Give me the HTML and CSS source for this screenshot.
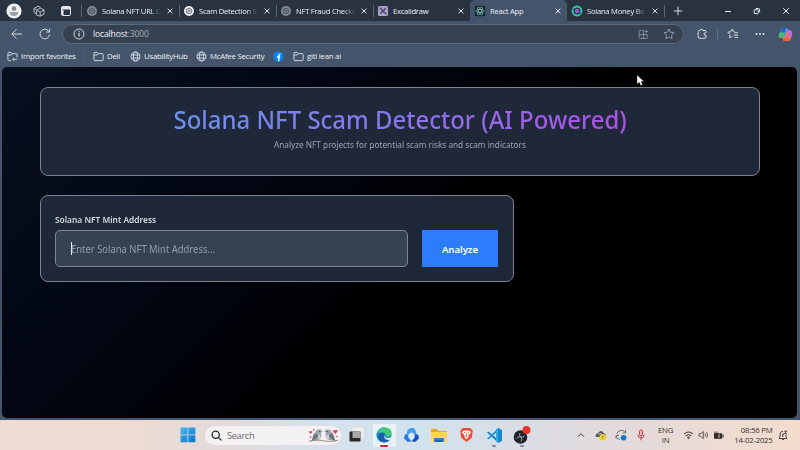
FILE: index.html
```html
<!DOCTYPE html>
<html lang="en">
<head>
<meta charset="utf-8">
<title>React App</title>
<link rel="stylesheet" href="styles.css">
</head>
<body>
<svg class="defs" width="0" height="0">
  <symbol id="globe" viewBox="0 0 12 12"><g fill="none" stroke="currentColor"><circle cx="6" cy="6" r="4.9"/><ellipse cx="6" cy="6" rx="2.2" ry="4.9"/><path d="M1.3 4.3h9.4M1.3 7.7h9.4"/></g></symbol>
  <symbol id="folder" viewBox="0 0 12 12"><path d="M1 9.5v-7q0-1 1-1h2.5l1.3 1.4H10q1 0 1 1v5.6q0 1-1 1H2q-1 0-1-1zM1 4.4h3.5l1.3-1.5" fill="none" stroke="currentColor"/></symbol>
  <symbol id="x" viewBox="0 0 8 8"><path d="M1.6 1.6l4.8 4.8M6.4 1.6L1.6 6.4" stroke="currentColor" stroke-width=".9"/></symbol>
  <symbol id="gpt" viewBox="0 0 12 12"><circle cx="6" cy="6" r="5" fill="currentColor"/><g fill="none" stroke="#303b48" stroke-width=".5" stroke-opacity=".75"><circle cx="6" cy="6" r="2.9"/><path d="M6 3.2l2.4 1.4v2.8L6 8.8 3.6 7.4V4.6zM3.6 4.6l4.8 2.8M8.4 4.6L3.6 7.4M6 3.2v5.6"/></g></symbol>
</svg>
<div class="browser">
  <div class="tabs">
    <div class="cell w28"><svg width="16" height="16" viewBox="0 0 16 16"><circle cx="8" cy="8" r="7.6" fill="#edf0f2"/><circle cx="8" cy="5.7" r="2.4" fill="#8b8f94"/><path d="M3.8 9h8.4q0 4-4.2 4T3.8 9z" fill="#9b9fa3"/></svg></div>
    <div class="cell w22"><svg width="12" height="12" viewBox="0 0 12 12" fill="none" stroke="#c5cbd2" stroke-width=".9"><path d="M3.5 8.7L1 7.5V3.4L5 1.3l2.6 1M3.5 10V5.2l3.8-2 3.7 1.7v4.3l-3.8 2zM3.5 5.2l3.7 1.9L11 4.9M7.2 7.1v4M1 3.4l2.5 1.3"/></svg></div>
    <div class="cell w31"><svg width="12" height="12" viewBox="0 0 12 12"><rect x="1.5" y="1.5" width="9" height="9" rx="1.3" fill="none" stroke="#e5e9ed"/><path d="M1.5 2h9v2.5h-9zM2 5h1.5v5H2z" fill="#e5e9ed"/></svg></div>
    <div class="tab sep first"><svg class="fav dim" viewBox="0 0 12 12"><use href="#gpt"/></svg><span class="t fade">Solana NFT URL D</span><svg class="close"><use href="#x"/></svg></div>
    <div class="tab sep"><svg class="fav lit" viewBox="0 0 12 12"><use href="#gpt"/></svg><span class="t fade">Scam Detection S</span><svg class="close"><use href="#x"/></svg></div>
    <div class="tab sep"><svg class="fav dim" viewBox="0 0 12 12"><use href="#gpt"/></svg><span class="t fade">NFT Fraud Checke</span><svg class="close"><use href="#x"/></svg></div>
    <div class="tab sep"><svg class="fav" viewBox="0 0 12 12"><rect x="1" y="1" width="10" height="10" rx="1.5" fill="#a5a3bd"/><path d="M2.8 2.8l6.4 6.4M9.2 2.8L2.8 9.2" stroke="#49467a" stroke-width="1.4"/><path d="M2.2 8.2l1.6 1.6M8.2 2.2l1.6 1.6" stroke="#d8d7e6" stroke-width=".7"/></svg><span class="t">Excalidraw</span><svg class="close"><use href="#x"/></svg></div>
    <div class="tab active"><svg class="fav" viewBox="0 0 12 12"><rect x=".8" y=".8" width="10.4" height="10.4" rx="1" fill="#1d2a32"/><g fill="none" stroke="#6fb9bd" stroke-width=".75"><ellipse cx="6" cy="6" rx="4.2" ry="1.6"/><ellipse cx="6" cy="6" rx="4.2" ry="1.6" transform="rotate(60 6 6)"/><ellipse cx="6" cy="6" rx="4.2" ry="1.6" transform="rotate(120 6 6)"/></g></svg><span class="t">React App</span><svg class="close"><use href="#x"/></svg></div>
    <div class="tab"><svg class="fav" viewBox="0 0 12 12"><circle cx="6" cy="6" r="4.5" fill="#263040" stroke="#28cfae" stroke-width="1.9"/><circle cx="6" cy="6" r="2.3" fill="#a253d0"/><path d="M1 3.6l1.6.8M9.4 8.6l1.4.9" stroke="#263040" stroke-width=".8"/></svg><span class="t fade">Solana Money Bo</span><svg class="close"><use href="#x"/></svg></div>
    <div class="cell w28 edge"><svg width="10" height="10" viewBox="0 0 10 10"><path d="M5 .7v8.6M.7 5h8.6" stroke="#e6eaee" stroke-width=".9"/></svg></div>
    <div class="window">
      <svg width="8" height="8"><path d="M1 4.5h6" stroke="#eef1f4"/></svg>
      <svg width="8" height="8" viewBox="0 0 8 8" fill="none" stroke="#eef1f4"><rect x="1.2" y="2.7" width="4" height="4" rx=".8"/><path d="M2.8 1.5h2.5q1.3 0 1.3 1.3v2.4"/></svg>
      <svg width="8" height="8" viewBox="0 0 8 8"><path d="M1.2 1.2l5.6 5.6M6.8 1.2L1.2 6.8" stroke="#eef1f4"/></svg>
    </div>
  </div>
  <div class="toolbar">
    <div class="cell w34"><svg width="12" height="12" viewBox="0 0 12 12" fill="none" stroke="#d5dce4"><path d="M5.5 1.2L.9 6l4.6 4.7M1 6h10"/></svg></div>
    <div class="cell w22"><svg width="12" height="12" viewBox="0 0 12 12" fill="none" stroke="#d5dce4"><path d="M10.6 6.5A4.8 4.8 0 1 1 9.3 2.7L10.5 4M10.6 .8v3.3H7.3"/></svg></div>
    <div class="address">
      <svg width="12" height="12" viewBox="0 0 12 12"><circle cx="6" cy="6" r="5" fill="none" stroke="#dbe1e7" stroke-width=".9"/><path d="M6 5.2v3.3M6 3.2v1.1" stroke="#fff"/></svg>
      <span class="url">localhost<i>:3000</i></span>
      <svg class="apps" width="11" height="11" viewBox="0 0 11 11" fill="none" stroke="#87919d" stroke-width=".9"><path d="M5.5 1.5H2q-.8 0-.8.8v6.4q0 .8.8.8h6.5q.8 0 .8-.8V5.6H1.2M5.5 1.5v8M8.3.8v3.4M6.6 2.5H10"/></svg>
      <svg width="12" height="12" viewBox="0 0 12 12"><path d="M6 1l1.5 3.2 3.5.5-2.5 2.5.6 3.5L6 9 2.9 10.7l.6-3.5L1 4.7l3.5-.5z" fill="none" stroke="#98a3af" stroke-width=".9"/></svg>
    </div>
    <div class="cell w36"><svg width="12" height="12" viewBox="0 0 12 12"><path d="M4 2.5q.5-2 2.3-1l.4 1h2.5q.8 0 .8.8v1.5q-2-.2-2 1.3t2 1.3v1.8q0 1-.9 1H6.8l-.8.6-1-.6H3.2q-.9 0-.9-1V7.5q-1-1.2 0-2.6V3.5q0-1 .9-1z" fill="none" stroke="#d9e0e7"/></svg></div>
    <div class="cell w26 left"><svg width="12" height="12" viewBox="0 0 12 12" fill="none" stroke="#d9e0e7" stroke-width=".95"><path d="M8 4.1L6.7 3.8 5.2 1 3.8 3.8l-3 .4 2.2 2.2L2.5 9.8l2.8-1.5M7.4 4.8H11M6.5 7.1H11M7.5 9.4H11"/></svg></div>
    <div class="cell w28 more"><svg width="10" height="4" fill="#eef1f4"><circle cx="1.5" cy="2" r=".9"/><circle cx="5" cy="2" r=".9"/><circle cx="8.5" cy="2" r=".9"/></svg></div>
    <div class="cell w24"><svg width="15" height="15" viewBox="0 0 15 15"><path d="M4 1h5q1 0 1.4 1L9 7l-3 4H2Q0 10 1 7z" fill="#269fdf"/><path d="M1 7l2-2.7L7 6 5 11H2Q0 10 1 7z" fill="#49b86a"/><path d="M9 3h2.5Q15 4 14 8l-2 5.5L5.5 14 4.5 11 7 9z" fill="#f17a54"/><path d="M9 3h2.5Q15 4 14 8l-1 2-4-1 1-3z" fill="#c766db"/><path d="M4 1h4L7 5l-3 .5L2.5 5z" fill="#315fc5"/><path d="M5 12l4-2 3 3.5-6 .5z" fill="#ee5751"/></svg></div>
  </div>
  <div class="bookmarks">
    <span class="bm b1"><svg viewBox="0 0 12 12"><path d="M1 9.5v-7q0-1 1-1h2.5l1.3 1.4H10q1 0 1 1V7M1 4.4h3.5l1.3-1.5M1 9.5q0 1 1 1h2.5M11 9H6M7.7 7.4L6 9l1.7 1.7" fill="none" stroke="currentColor"/></svg>Import favorites</span>
    <span class="bm b2"><svg><use href="#folder"/></svg>Dell</span>
    <span class="bm b3"><svg><use href="#globe"/></svg>UsabilityHub</span>
    <span class="bm b4"><svg><use href="#globe"/></svg>McAfee Security</span>
    <span class="bm b5"><svg viewBox="0 0 12 12"><circle cx="6" cy="6" r="5.6" fill="#0781ee"/><path d="M6.3 11.3V5q0-1.6 1.8-1.5M4.4 6.6h3.4" stroke="#fff" stroke-width="1.5" fill="none"/></svg></span>
    <span class="bm b6"><svg><use href="#folder"/></svg>gitl lean ai</span>
  </div>
  <main class="page">
    <header class="card hero">
      <h1>Solana NFT Scam Detector (AI Powered)</h1>
      <p>Analyze NFT projects for potential scam risks and scam indicators</p>
    </header>
    <section class="card form">
      <div class="field">
        <label>Solana NFT Mint Address</label>
        <div class="input"><span class="caret"></span><span class="ph">Enter Solana NFT Mint Address...</span></div>
      </div>
      <button>Analyze</button>
    </section>
    <svg class="pointer" width="9" height="13" viewBox="0 0 9 13"><path d="M1 1v9.3l2.2-2 1.5 3.3 1.9-.8-1.5-3.2h3z" fill="#fff" stroke="#141923" stroke-width=".4"/></svg>
  </main>
</div>
<footer class="taskbar">
  <div class="start"><svg width="16" height="16" viewBox="0 0 16 16"><defs><linearGradient id="w" x2="1" y2="1"><stop stop-color="#48b7ed"/><stop offset="1" stop-color="#0672c9"/></linearGradient></defs><path d="M.5.5h7v7h-7zM8.3.5h7v7h-7zM.5 8.3h7v7h-7zM8.3 8.3h7v7h-7z" fill="url(#w)"/></svg></div>
  <div class="search"><svg width="11" height="11" viewBox="0 0 11 11" fill="none" stroke="#252a31" stroke-width="1.3"><circle cx="4.7" cy="4.7" r="3.6"/><path d="M7.4 7.4l3 3"/></svg><span>Search</span>
    <svg class="birds" width="31" height="16" viewBox="0 0 30 15"><path d="M4 13Q4 7 7 4.5 9 1 12.5 2.5l2 1.8-2 .8q1.5 5-2 7zM26 13q0-6-3-8.500-2-3.500-5.500-2l-2 1.800 2 .8q-1.500 5 2 7z" fill="#9aa5ae"/><path d="M6.500 6.500q4-.5 3 3L3 14zM23.500 6.500q-4-.5-3 3l6.500 4.500z" fill="#66737f"/><path d="M9.500 7q3 0 2.500 3l-2 2zM20.500 7q-3 0-2.500 3l2 2z" fill="#d8d3cd"/><circle cx="11.300" cy="4.100" r=".5" fill="#2b3138"/><circle cx="18.700" cy="4.100" r=".5" fill="#2b3138"/><path d="M1 13.400q9-1.500 14-.3t14-.3" stroke="#8c7a6c" stroke-width=".8" fill="none"/><path d="M2.500 6.500L.8 4.700Q1 3 2.500 4q1.500-1 1.700.7zM5.500 3.500L4.400 2.300 5.500 1.600l1.100.7zM26.500 6.500l-2.300-2.700Q24.500 1.900 26.500 3q2-1.100 2.300.8zM2.500 10.500L1.400 9.200l1.100-.5 1.100.5zM28 10l-1-1.200 1-.5 1 .5z" fill="#e34256"/></svg>
  </div>
  <div class="app view"><svg width="16" height="16" viewBox="0 0 16 16"><rect x="4.500" y="1" width="11" height="10" rx="1" fill="#f1eeec"/><rect x="1.500" y="4.500" width="11" height="10" rx=".8" fill="#242628"/><path d="M4.500 4.500h8v6.500h-8z" fill="#aaa8a7"/></svg></div>
  <div class="app current"><svg width="18" height="18" viewBox="0 0 18 18"><circle cx="9" cy="9" r="7.6" fill="#1686cd"/><path d="M2 7Q4 1 10 1.400q7 .6 6.600 6.200-1 3.800-5.400 3.200 0-5-5-4.200Q3.300 7 2 7z" fill="#43c978"/><path d="M2 7Q4 1 10 1.400q-5 1-8 5.600z" fill="#31b8df"/><path d="M3.800 8q5-3 6.200 1-2.500 1.400-.6 3.800 2.800 1.700 6-.4-3 5-8 3.600Q2 13.500 3.800 8z" fill="#175ca9"/><path d="M9.500 8.500q-1 3.300 2.500 3.600 3 .2 5-1.600l-1 3q-3 1-5.500-.5-2.500-2-1-4.500z" fill="#dcebf3"/></svg><b class="red"></b></div>
  <div class="app"><svg width="17" height="17" viewBox="0 0 18 18"><path d="M5 3l3-2h3l2 2 1.500 5h-4L9 5 7.500 8h-4z" fill="#439cf0"/><path d="M2 8h5l-.5 4 2.500 3-4 1-4-4z" fill="#2676e5"/><path d="M16 8h-5l.5 4L9 15l4 1 4-4z" fill="#164fc6"/><circle cx="9" cy="9.800" r="3.400" fill="#dcecf3"/></svg></div>
  <div class="app"><svg width="18" height="17" viewBox="0 0 18 17"><path d="M1 2h6l1.500 2H17v11H1z" fill="#e8a820"/><path d="M1 5h16v10H1z" fill="#ffd25c"/><path d="M4 11h10v4H4z" fill="#2584ce"/><path d="M6 13h6v2H6z" fill="#1664a6"/></svg></div>
  <div class="app"><svg width="15" height="16" viewBox="0 0 15 16"><path d="M3.700 1h7.600l2.500 2.700-1 7L7.500 15l-5.300-4.300-1-7z" fill="#f04b32"/><path d="M3.800 4l2.300-.5h2.800l2.300.5.7 1.500-2.500 3 .2 1.800-2.100 2-2.100-2 .2-1.800-2.500-3z" fill="#fff"/><path d="M5 5.300l1.500.5M10 5.300l-1.500.5M7.500 6v3.500M6.300 9l1.200.8L8.700 9" stroke="#f04b32" stroke-width=".8" fill="none"/></svg></div>
  <div class="app"><svg width="17" height="17" viewBox="0 0 17 17"><path d="M1 5.500l1.500-1L12.500 13v3z" fill="#197fc4"/><path d="M1 11.500l1.500 1L12.500 4V1z" fill="#2798dc"/><path d="M12 1l4 2v11l-4 2z" fill="#1688ce"/><path d="M12 1v15l-2-1.500v-12z" fill="#36a9e9"/></svg><b></b></div>
  <div class="app"><svg width="19" height="19" viewBox="0 0 19 19"><circle cx="8.500" cy="11" r="6.800" fill="#20232a"/><path d="M8 7q-1.500 2.500 1 4 2.500.7 3.500-1.500M9 11q-3.500-.8-4.500 1.500M9 11q1.700 2.500 0 4.300" fill="none" stroke="#a9adb3"/><circle cx="14.500" cy="4" r="4" fill="#e83428"/></svg><b></b></div>
  <div class="tray">
    <div class="cell w18"><svg width="8" height="6"><path d="M1 4.700l3-3 3 3" fill="none" stroke="#34383e"/></svg></div>
    <div class="cell w22"><svg width="12" height="12" viewBox="0 0 12 12"><path d="M1 8Q-.5 5 3 4q3-4 6 .2 2.500.5 2 3.800z" fill="#55595c"/><path d="M3 5q3-1 5 1" fill="none" stroke="#d4d4d4"/><circle cx="7.800" cy="8.200" r="3.300" fill="#f1d130"/><path d="M7.800 6.500v2M7.800 9.300v.8" stroke="#6a5a14" stroke-width=".8"/></svg></div>
    <div class="cell w18"><svg width="12" height="12" viewBox="0 0 12 12"><path d="M1.500 4.700Q3.500.8 7 1.300q2 .3 3.400 2.300M10.500 1v3H7.800M10 6M1 6.500q0 3.500 4 4M1 9.500v-3h3" fill="none" stroke="#6e7479"/><circle cx="8.600" cy="8.800" r="2.800" fill="#1475d1"/></svg></div>
    <div class="cell w22"><svg width="8" height="12" viewBox="0 0 8 12"><rect x="2.500" y="1" width="3" height="6" rx="1.500" fill="#f0b8b4" stroke="#c63c43"/><path d="M.8 5.500Q1 9 4 9t3.200-3.500M4 9v2.300" fill="none" stroke="#c63c43"/></svg></div>
    <div class="lang">ENG<br>IN</div>
    <div class="cell w16"><svg width="11" height="10" viewBox="0 0 11 10" fill="none" stroke="#37342f"><path d="M1 4q4.500-4 9 0M2.600 5.800q2.900-2.600 5.800 0M4.200 7.300q1.300-1.100 2.600 0"/><circle cx="5.500" cy="8.200" r=".4"/></svg></div>
    <div class="cell w14"><svg width="11" height="10" viewBox="0 0 11 10" fill="none" stroke="#55504a" stroke-width=".9"><path d="M1 3.700h1.700L5.300 1.500v7L2.700 6.400H1zM7 3.500q1 1.500 0 3M8.600 2.200q1.900 2.800 0 5.600"/></svg></div>
    <div class="cell w16"><svg width="11" height="9" viewBox="0 0 11 9"><rect x="1" y="2.200" width="8.300" height="5.500" rx="1" fill="#2e2a26"/><path d="M10.200 3.800v2.300" stroke="#2e2a26"/><path d="M2 .5v3M4 .5v3M1 2.500h4" stroke="#453e38"/><path d="M7 3l-2 2.200h2L5.500 7" stroke="#dfcbb9" fill="none" stroke-width=".7"/></svg></div>
    <div class="clock">08:56 PM<br>14-02-2025</div>
    <svg class="bell" width="10" height="11" viewBox="0 0 10 11" fill="none" stroke="#3b3732" stroke-width=".9"><path d="M5 1.500H3.800Q2 2 2 4v3L1 8.500h8L8 7V5M3.800 9q1.200 1.500 2.400 0M6.200 1.200H8.800L6.400 3.800H9M4 4h1.600L4 6h1.600"/></svg>
  </div>
</footer>
</body>
</html>
```

FILE: styles.css
```css
* { box-sizing: border-box; }
body { margin: 0; width: 800px; height: 450px; overflow: hidden; font-family: "Open Sans", "Noto Sans", sans-serif; color: #edf1f5; }
svg { display: block; flex: none; }
.defs { display: none; }
.browser { height: 420px; background: #44546a; display: flex; flex-direction: column; }
.cell { display: flex; align-items: center; justify-content: center; flex: none; }
.w14 { width: 14px; } .w16 { width: 16px; } .w18 { width: 18px; } .w22 { width: 22px; }
.w24 { width: 24px; } .w26 { width: 26px; } .w28 { width: 28px; } .w31 { width: 31px; }
.w34 { width: 34px; } .w36 { width: 36px; }

.tabs { height: 21px; flex: none; background: #293340; display: flex; align-items: stretch; }
.tab { width: 97px; padding: 1px 3px 0 4px; display: flex; align-items: center; flex: none; }
.tab.first { width: 98px; padding-left: 5px; }
.tab.sep { background: linear-gradient(#5c6570, #5c6570) 0 5px / 1px 12px no-repeat; }
.tab.active { background: #44546a; border-radius: 5px 5px 0 0; }
.fav { width: 12px; height: 12px; margin-right: 4px; }
.dim { color: #858b92; }
.lit { color: #eef0f2; }
.t { width: 62px; margin-right: 2px; overflow: hidden; white-space: nowrap; font-size: 7.6px; letter-spacing: -0.24px; line-height: 12px; }
.fade { -webkit-mask-image: linear-gradient(90deg, #000 80%, transparent 98%); mask-image: linear-gradient(90deg, #000 80%, transparent 98%); width: 60px; margin-right: 4px; }
.close { width: 8px; height: 8px; }
.edge { background: linear-gradient(#5c6570, #5c6570) 0 5px / 1px 12px no-repeat; }
.window { flex: 1; display: flex; align-items: center; justify-content: space-between; padding: 0 10px 0 32px; }

.toolbar { height: 26px; flex: none; display: flex; align-items: center; }
.address { width: 622px; height: 20px; margin: 0 0 0 6px; padding: 0 8px 0 10px; border: 1px solid #5c697b; border-radius: 10px; background: #364152; display: flex; align-items: center; }
.url { margin-left: 8px; font-size: 8.6px; letter-spacing: -0.16px; line-height: 12px; }
.url i { font-style: normal; color: #a3acb7; }
.apps { margin-left: auto; margin-right: 14px; }
.left { border-left: 1px solid #617084; height: 11px; margin-left: -3px; padding-left: 5px; margin-right: 2px; }
.more svg { margin-left: 2px; }

.bookmarks { height: 18px; margin-bottom: 2px; flex: none; padding-left: 7px; display: flex; align-items: center; font-size: 7.8px; white-space: nowrap; letter-spacing: -0.24px; }
.bm { display: flex; align-items: center; gap: 3px; height: 12px; flex: none; line-height: 12px; }
.bm svg { width: 11px; height: 11px; color: #d9e1e9; }
.b1 { width: 86px; } .b2 { width: 37px; } .b3 { width: 66px; } .b4 { width: 77px; } .b5 { width: 20px; }
.b1 { background: linear-gradient(#53627a, #53627a) 77px 1px / 1px 10px no-repeat; }

.page { position: relative; height: 351px; margin: 0 3px 2px 2px; padding: 20px 37px 0 38px; border-radius: 5px; background: linear-gradient(135deg, #080f1e 0%, #020613 30%, #000 55%); font-family: "Noto Sans", "Open Sans", sans-serif; }
.card { background: #1f2838; border: 1px solid #7d848d; border-radius: 8px; }
.hero { height: 89px; display: flex; flex-direction: column; align-items: center; }
.hero h1 { margin: 14px 0 0; font-size: 25.5px; font-weight: 500; line-height: 35px; transform: scaleX(.94); white-space: nowrap; background: linear-gradient(90deg, #6c91ef, #8c72ec 55%, #ae50e6); -webkit-background-clip: text; background-clip: text; color: transparent; }
.hero p { margin: 1px 0 0; font-size: 8.9px; transform: scaleX(.927); line-height: 13px; color: #9aa3b1; white-space: nowrap; }
.form { width: 474px; height: 87px; margin-top: 19px; padding: 17px 15px 0 14px; display: flex; justify-content: space-between; align-items: flex-start; }
.field { width: 353px; }
.field label { display: block; height: 17px; padding-top: 1px; font-size: 8.8px; font-weight: 600; transform: scaleX(.95); transform-origin: 0 0; line-height: 13px; color: #d4d9e1; white-space: nowrap; }
.input { height: 37px; border: 1px solid #7c8796; border-radius: 5px; background: #364152; padding-left: 15px; display: flex; align-items: center; }
.caret { width: 1px; height: 13px; background: #f4f6f8; }
.ph { margin-left: -1px; padding-top: 1px; font-size: 10px; transform: scaleX(.943); transform-origin: 0 0; color: #929caa; white-space: nowrap; }
.form button { margin-top: 17px; width: 76px; height: 37px; border: 0; padding: 1px 0 0; background: #2c7dfc; color: #fff; font: 600 9.7px "Noto Sans", sans-serif; letter-spacing: -0.1px; }
.pointer { position: absolute; left: 634px; top: 7px; }

.taskbar { height: 30px; display: flex; align-items: center; background: linear-gradient(90deg, #ecdcd3 0, #eddcd2 15%, #e3dadb 28%, #d7e1eb 40%, #d1e3ed 52%, #dbdce4 66%, #e5dad9 80%, #f3ddcd 100%); }
.start { margin-left: 180px; width: 25px; }
.search { width: 136px; height: 19px; border-radius: 10px; background: #f3f1f1; display: flex; align-items: center; padding: 0 2px 0 6px; }
.search span { margin-left: 5px; font-size: 9.2px; letter-spacing: -0.3px; color: #686b70; }
.birds { margin-left: auto; }
.app { width: 27.6px; height: 30px; display: flex; align-items: center; justify-content: center; flex: none; position: relative; }
.view { width: 29px; }
.current { background: linear-gradient(#eaf2f5, #eaf2f5) 3px 4px / 23px 23px no-repeat; }
.app b { position: absolute; left: 12px; top: 25px; width: 4px; height: 2px; border-radius: 1px; background: #858b92; }
.app .red { left: 10px; width: 8px; background: #bb2639; }
.tray { margin-left: 36px; display: flex; align-items: center; flex: 1; color: #35322f; font-size: 7.8px; line-height: 10px; }
.lang { width: 28px; text-align: center; letter-spacing: -0.2px; margin-right: 1px; }
.clock { width: 46px; text-align: right; letter-spacing: -0.24px; white-space: nowrap; }
.bell { margin-left: 5px; }
```
